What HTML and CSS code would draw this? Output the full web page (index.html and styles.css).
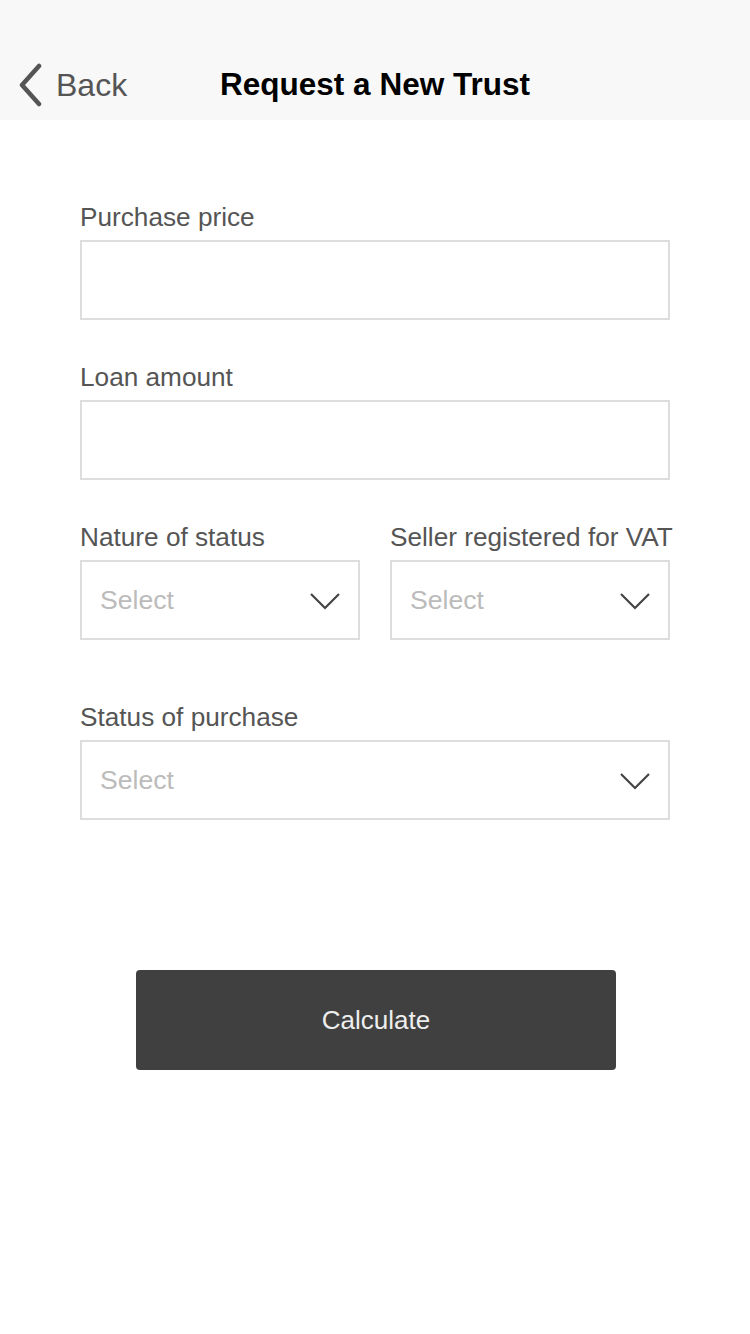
FILE: index.html
```html
<!DOCTYPE html>
<html>
<head>
<meta charset="utf-8">
<link rel="stylesheet" href="styles.css">
</head>
<body>
<header class="nav">
  <div class="back">
    <svg class="back-icon" width="28" height="44" viewBox="0 0 28 44"><path d="M22 3 L5 22 L22 41" fill="none" stroke="#555" stroke-width="4.5" stroke-linecap="round" stroke-linejoin="round"/></svg>
    <span class="back-text">Back</span>
  </div>
  <h1 class="title">Request a New Trust</h1>
</header>
<main class="form">
  <div class="field">
    <label class="label">Purchase price</label>
    <div class="box"></div>
  </div>
  <div class="field">
    <label class="label">Loan amount</label>
    <div class="box"></div>
  </div>
  <div class="row">
    <div class="field">
      <label class="label">Nature of status</label>
      <div class="box select"><span class="ph">Select</span><svg width="32" height="18" viewBox="0 0 32 18"><path d="M2 2 L16 16 L30 2" fill="none" stroke="#444" stroke-width="2.2"/></svg></div>
    </div>
    <div class="field">
      <label class="label">Seller registered for VAT</label>
      <div class="box select"><span class="ph">Select</span><svg width="32" height="18" viewBox="0 0 32 18"><path d="M2 2 L16 16 L30 2" fill="none" stroke="#444" stroke-width="2.2"/></svg></div>
    </div>
  </div>
  <div class="field last">
    <label class="label">Status of purchase</label>
    <div class="box select"><span class="ph">Select</span><svg width="32" height="18" viewBox="0 0 32 18"><path d="M2 2 L16 16 L30 2" fill="none" stroke="#444" stroke-width="2.2"/></svg></div>
  </div>
  <button class="btn">Calculate</button>
</main>
</body>
</html>
```
FILE: styles.css
```css
* { box-sizing: border-box; }
html, body { margin: 0; padding: 0; background: #fff; }
body { width: 750px; height: 1334px; font-family: "Liberation Sans", Arial, sans-serif; }
.nav {
  height: 120px;
  background: #f8f8f8;
  padding-top: 50px;
  display: flex;
  align-items: center;
  position: relative;
}
.back { display: flex; align-items: center; padding-left: 17px; height: 70px; }
.back-icon { display: block; margin-top: 0; }
.back-text { font-size: 32px; color: #555; margin-left: 11px; }
.title {
  position: absolute;
  left: 0; right: 0; top: 40px;
  height: 80px; line-height: 88px;
  margin: 0;
  text-align: center;
  font-size: 31.5px;
  font-weight: 600;
  color: #000;
  pointer-events: none;
}
.form { padding: 80px 80px 0 80px; display: flex; flex-direction: column; }
.field { display: flex; flex-direction: column; margin-bottom: 40px; }
.field.last { margin-bottom: 150px; }
.row { display: flex; gap: 30px; margin-bottom: 20px; }
.row .field { flex: 1 1 0; min-width: 0; margin-bottom: 40px; }
.label { font-size: 26.2px; line-height: 34px; color: #555; margin-bottom: 6px; white-space: nowrap; }
.box { height: 80px; border: 2px solid #ddd; background: #fff; }
.select { display: flex; align-items: center; justify-content: space-between; padding: 0 17px 0 18px; }
.ph { font-size: 26.6px; color: #bbb; }
.select svg { display: block; margin-top: 2px; }
.btn {
  align-self: center;
  width: 480px; height: 100px;
  background: #404040; color: #eee;
  border: none; border-radius: 4px;
  font-family: "Liberation Sans", Arial, sans-serif;
  font-size: 26px;
  margin-left: 2px;
}
```
